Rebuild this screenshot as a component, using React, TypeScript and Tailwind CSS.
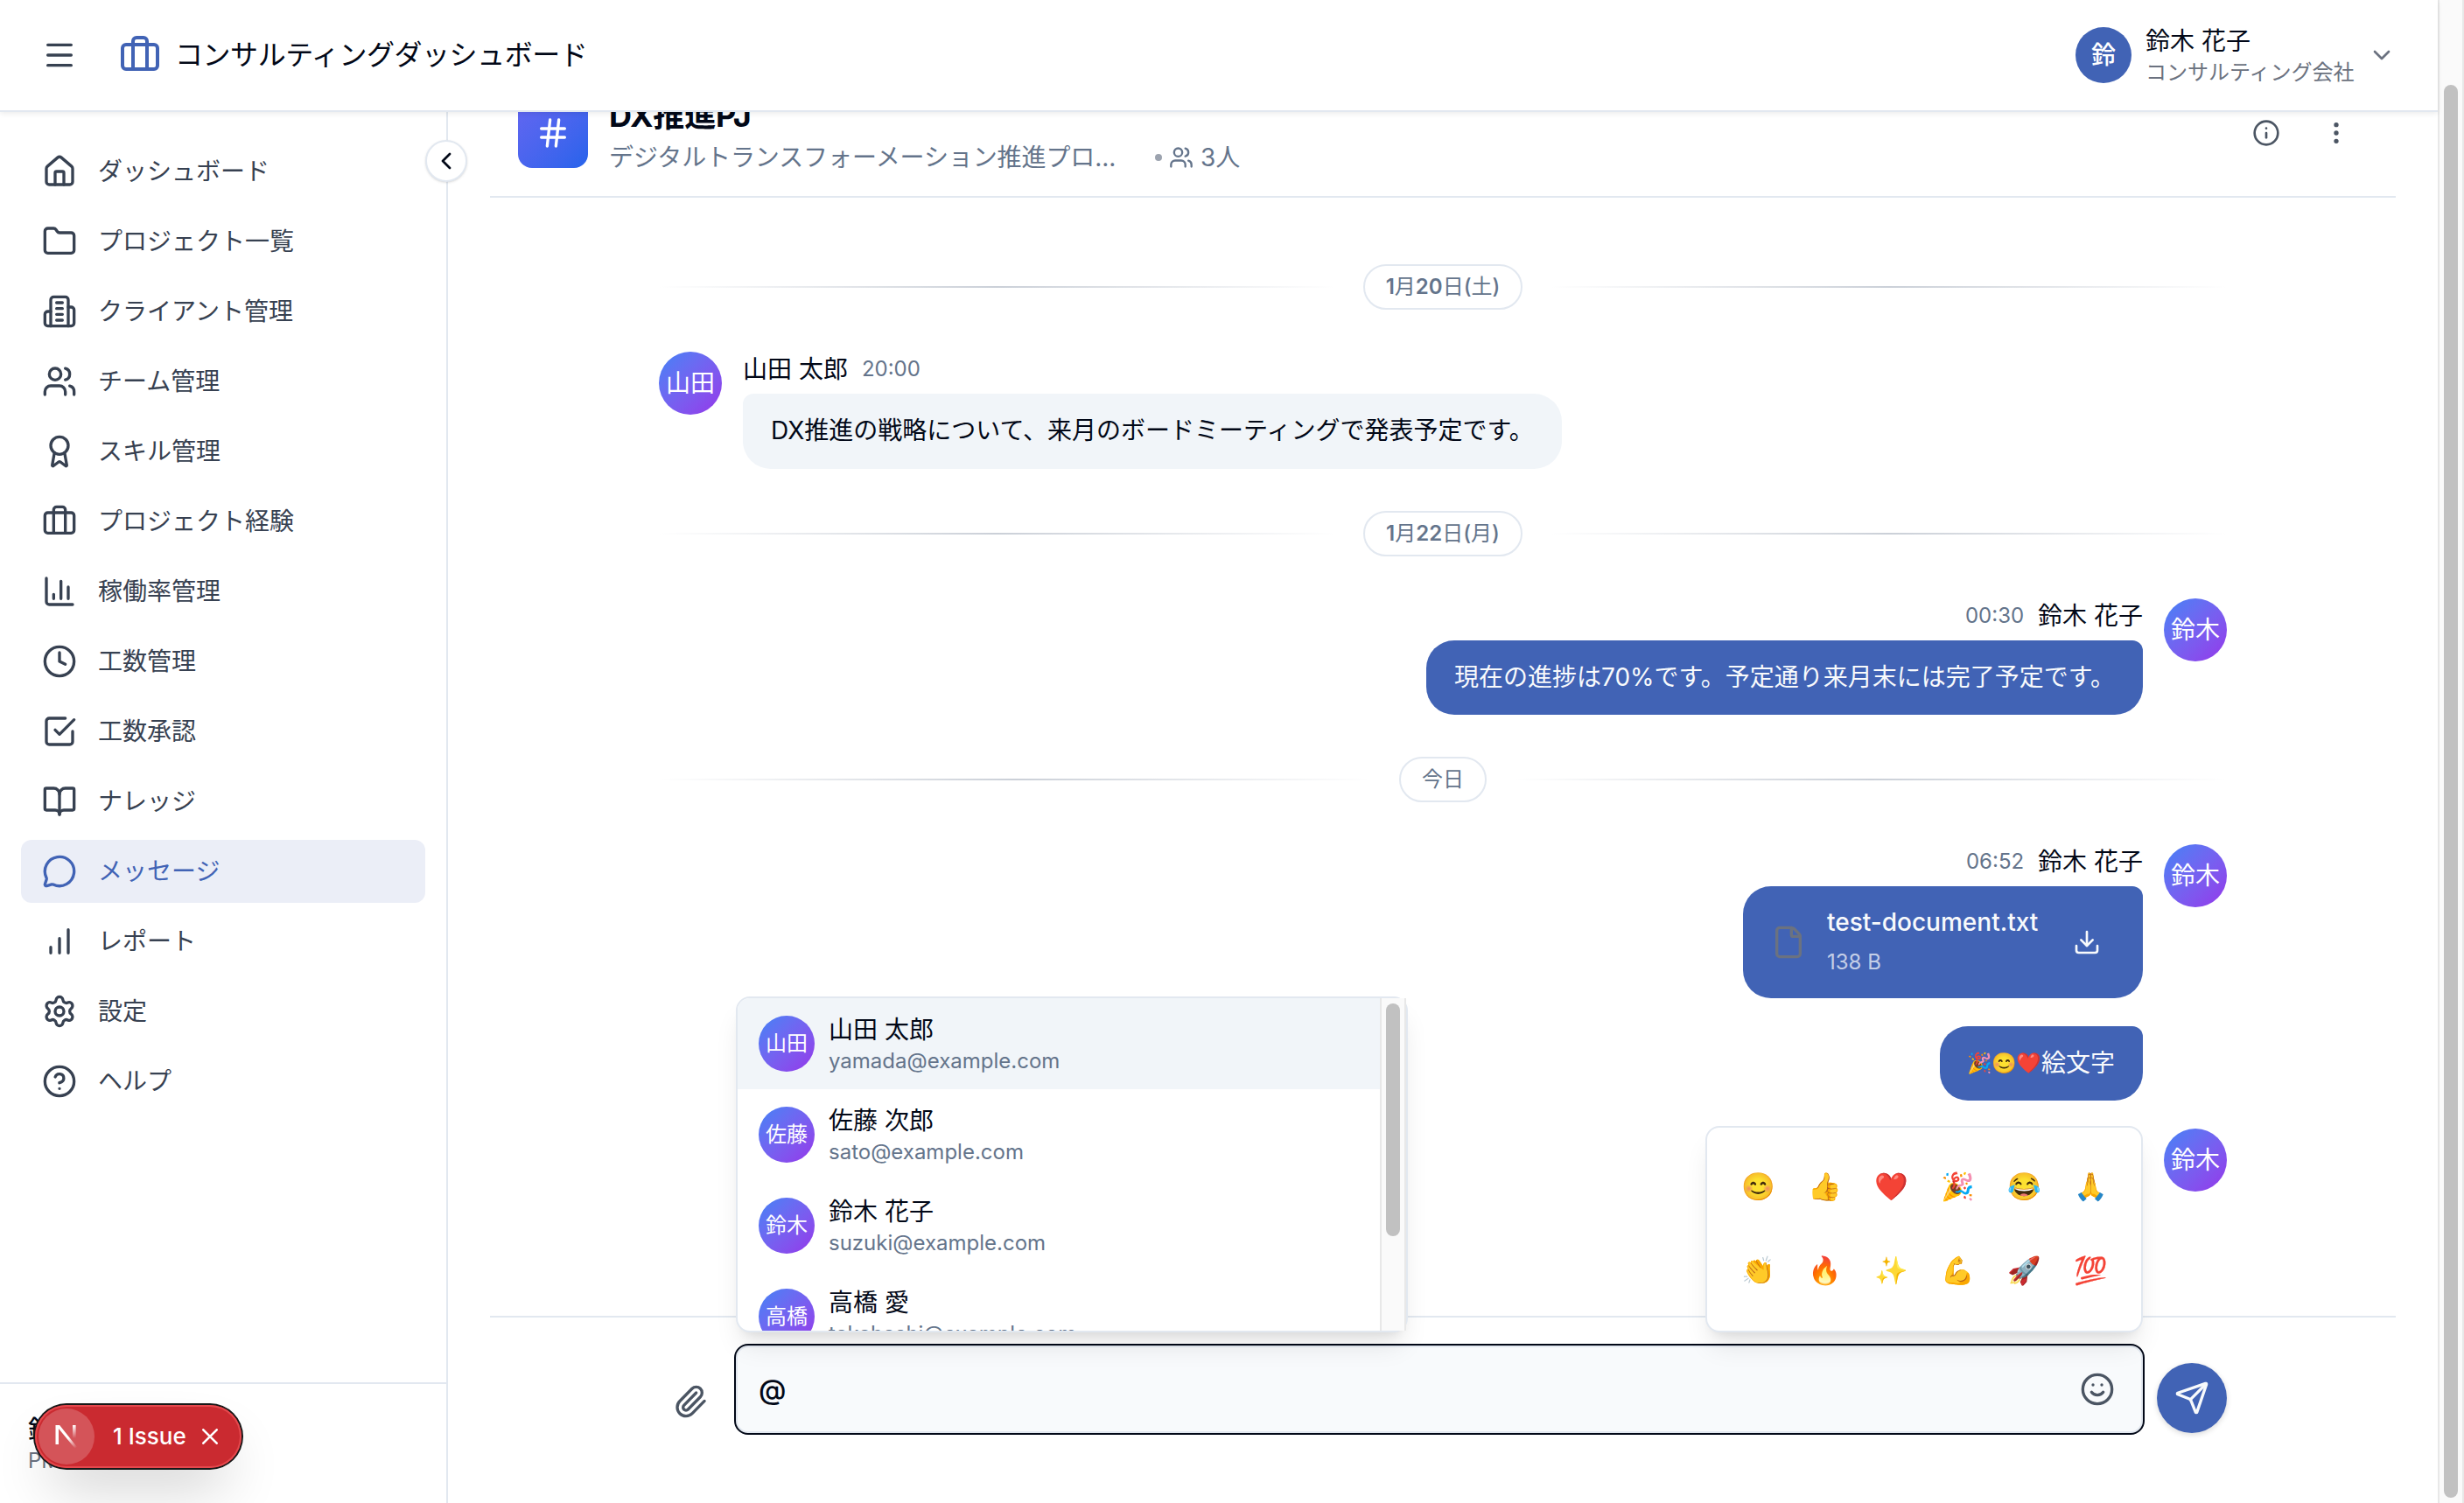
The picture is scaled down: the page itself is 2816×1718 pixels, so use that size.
import React from "react";
import {
  Menu,
  Briefcase,
  ChevronDown,
  ChevronLeft,
  Folder,
  Users,
  Award,
  Clock,
  BookOpen,
  MessageCircle,
  Settings,
  Info,
  MoreVertical,
  File as FileIcon,
  Download,
  Hash,
  Paperclip,
  Smile,
  Send,
} from "lucide-react";

type IconProps = { className?: string };

function strokeIcon(children: React.ReactNode) {
  return function Icon({ className }: IconProps) {
    return (
      <svg
        viewBox="0 0 24 24"
        fill="none"
        stroke="currentColor"
        strokeWidth={2}
        strokeLinecap="round"
        strokeLinejoin="round"
        className={className}
      >
        {children}
      </svg>
    );
  };
}

const House = strokeIcon(
  <>
    <path d="M15 21v-8a1 1 0 0 0-1-1h-4a1 1 0 0 0-1 1v8" />
    <path d="M3 10a2 2 0 0 1 .709-1.528l7-5.999a2 2 0 0 1 2.582 0l7 5.999A2 2 0 0 1 21 10v9a2 2 0 0 1-2 2H5a2 2 0 0 1-2-2z" />
  </>
);

const Building = strokeIcon(
  <>
    <path d="M6 22V4a2 2 0 0 1 2-2h8a2 2 0 0 1 2 2v18Z" />
    <path d="M6 12H4a2 2 0 0 0-2 2v6a2 2 0 0 0 2 2h2" />
    <path d="M18 9h2a2 2 0 0 1 2 2v9a2 2 0 0 1-2 2h-2" />
    <path d="M10 6h4M10 10h4M10 14h4M10 18h4" />
  </>
);

const ChartColumn = strokeIcon(
  <>
    <path d="M3 3v16a2 2 0 0 0 2 2h16" />
    <path d="M18 17V9M13 17V5M8 17v-3" />
  </>
);

const Bars = strokeIcon(<path d="M18 20V4M12 20V10M6 20v-4" />);

const CheckSquare = strokeIcon(
  <>
    <path d="m9 11 3 3L22 4" />
    <path d="M21 12v7a2 2 0 0 1-2 2H5a2 2 0 0 1-2-2V5a2 2 0 0 1 2-2h11" />
  </>
);

const Help = strokeIcon(
  <>
    <circle cx="12" cy="12" r="10" />
    <path d="M9.09 9a3 3 0 0 1 5.83 1c0 2-3 3-3 3M12 17h.01" />
  </>
);

const navItems = [
  { label: "ダッシュボード", Icon: House },
  { label: "プロジェクト一覧", Icon: Folder },
  { label: "クライアント管理", Icon: Building },
  { label: "チーム管理", Icon: Users },
  { label: "スキル管理", Icon: Award },
  { label: "プロジェクト経験", Icon: Briefcase },
  { label: "稼働率管理", Icon: ChartColumn },
  { label: "工数管理", Icon: Clock },
  { label: "工数承認", Icon: CheckSquare },
  { label: "ナレッジ", Icon: BookOpen },
  { label: "メッセージ", Icon: MessageCircle, active: true },
  { label: "レポート", Icon: Bars },
  { label: "設定", Icon: Settings },
  { label: "ヘルプ", Icon: Help },
];

const members = [
  { initials: "山田", name: "山田 太郎", email: "yamada@example.com", active: true },
  { initials: "佐藤", name: "佐藤 次郎", email: "sato@example.com" },
  { initials: "鈴木", name: "鈴木 花子", email: "suzuki@example.com" },
  { initials: "高橋", name: "高橋 愛", email: "takahashi@example.com" },
];

const emojis = ["😊", "👍", "❤️", "🎉", "😂", "🙏", "👏", "🔥", "✨", "💪", "🚀", "💯"];

function TopBar() {
  return (
    <header className="relative z-10 flex h-32 shrink-0 items-center border-b-2 border-[#e2e8f0] bg-white px-12 shadow-[0_2px_6px_rgba(0,0,0,0.08)]">
      <Menu className="size-10 text-[#374151]" />
      <Briefcase className="ml-12 size-12 text-[#4163b5]" />
      <h1 className="ml-4 text-[32px] leading-[48px] tracking-[-0.45px] text-[#020817]">
        コンサルティングダッシュボード
      </h1>
      <div className="ml-auto flex items-center">
        <div className="flex size-16 items-center justify-center rounded-full bg-[#4163b5] text-[28px] font-medium text-white">
          鈴
        </div>
        <div className="ml-4 w-[240px]">
          <div className="text-[28px] leading-10 text-[#020817]">鈴木 花子</div>
          <div className="text-[24px] leading-8 text-[#6b7280]">コンサルティング会社</div>
        </div>
        <ChevronDown className="ml-[14px] size-8 text-[#6b7280]" />
      </div>
    </header>
  );
}

function Sidebar() {
  return (
    <aside className="relative flex w-[512px] shrink-0 flex-col border-r-2 border-[#e2e8f0] bg-white">
      <nav className="flex flex-1 flex-col gap-2 px-6 pt-8">
        {navItems.map(({ label, Icon, active }) => (
          <div
            key={label}
            className={
              active
                ? "flex h-[72px] items-center gap-6 rounded-xl bg-[#ebeef7] px-6 text-[28px] text-[#4163b5]"
                : "flex h-[72px] items-center gap-6 rounded-xl px-6 text-[28px] text-[#374151]"
            }
          >
            <Icon className="size-10 shrink-0" />
            <span>{label}</span>
          </div>
        ))}
      </nav>
      <div className="h-[138px] border-t-2 border-[#e2e8f0] p-8">
        <div className="text-[28px] leading-10 font-medium text-[#020817]">鈴木 花子</div>
        <div className="text-[24px] leading-8 text-[#6b7280]">PM</div>
      </div>
      <button className="absolute top-8 -right-6 z-10 flex size-12 items-center justify-center rounded-full border-2 border-[#e2e8f0] bg-white shadow-sm">
        <ChevronLeft className="size-8 shrink-0 text-[#020817]" />
      </button>
      <IssueBadge />
    </aside>
  );
}

function IssueBadge() {
  return (
    <div className="absolute bottom-10 left-10 z-20 flex h-[72px] w-[236px] items-center rounded-full bg-[#ca2a30] pl-1 text-white shadow-[0_0_0_2px_#171717,inset_0_0_0_2px_#e5484d,0_32px_64px_-16px_rgba(0,0,0,0.24)]">
      <div className="flex size-16 items-center justify-center rounded-full bg-white/20">
        <svg viewBox="0 0 28 30" className="h-[30px] w-[28px]" fill="none">
          <defs>
            <linearGradient id="diag" x1="16" y1="17" x2="25" y2="28" gradientUnits="userSpaceOnUse">
              <stop stopColor="#fff" />
              <stop offset="1" stopColor="#fff" stopOpacity="0" />
            </linearGradient>
            <linearGradient id="stem" x1="23" y1="2" x2="23" y2="17" gradientUnits="userSpaceOnUse">
              <stop stopColor="#fff" />
              <stop offset="1" stopColor="#fff" stopOpacity="0" />
            </linearGradient>
          </defs>
          <path d="M1.5 24V2h4.6L26 27l-2 2L5 6v18z" fill="url(#diag)" />
          <path d="M21 2h3.6v16H21z" fill="url(#stem)" />
        </svg>
      </div>
      <span className="ml-[21px] text-[26px] leading-none font-medium whitespace-nowrap">1 Issue</span>
      <svg viewBox="0 0 18 18" className="mr-[27px] ml-auto size-[18px]" stroke="#fff" strokeWidth="2.6" strokeLinecap="round">
        <path d="M1.3 1.3 16.7 16.7M16.7 1.3 1.3 16.7" />
      </svg>
    </div>
  );
}

function ChatHeader() {
  return (
    <div className="-mt-14 flex h-[154px] shrink-0 items-center border-b-2 border-[#e2e8f0] px-8 pt-2">
      <div className="flex size-20 items-center justify-center rounded-2xl bg-linear-to-br from-[#6366f1] to-[#2563eb]">
        <Hash className="size-10 text-white" />
      </div>
      <div className="ml-6">
        <h2 className="text-[36px] leading-[56px] font-bold tracking-[-0.005em] text-[#020817]">DX推進PJ</h2>
        <div className="flex items-center text-[28px] leading-10 text-[#64748b]">
          <span className="w-[624px] tracking-[-0.1px]">デジタルトランスフォーメーション推進プロ...</span>
          <span className="size-2 rounded-full bg-[#9ca3af]" />
          <Users className="ml-2 size-7" />
          <span className="ml-2">3人</span>
        </div>
      </div>
      <div className="ml-auto flex items-center gap-12 pr-5 text-[#4b5563]">
        <Info className="size-8" />
        <MoreVertical className="size-8" />
      </div>
    </div>
  );
}

function DateDivider({ children }: { children: React.ReactNode }) {
  return (
    <div className="my-12 flex items-center first:mt-0">
      <div className="h-[2px] flex-1 bg-linear-to-r from-transparent via-[#cbd0d8] to-transparent" />
      <span className="mx-8 rounded-full border-2 border-[#e2e8f0] bg-white px-6 py-2 text-[24px] leading-8 text-[#64748b]">
        {children}
      </span>
      <div className="h-[2px] flex-1 bg-linear-to-r from-transparent via-[#cbd0d8] to-transparent" />
    </div>
  );
}

function Avatar({ children, small }: { children: string; small?: boolean }) {
  return (
    <div
      className={
        small
          ? "flex size-16 shrink-0 items-center justify-center rounded-full bg-linear-to-br from-[#3b82f6] to-[#9333ea] text-[24px] text-white"
          : "flex size-[72px] shrink-0 items-center justify-center rounded-full bg-linear-to-br from-[#3b82f6] to-[#9333ea] text-[28px] text-white"
      }
    >
      {children}
    </div>
  );
}

function OwnMessage({ time, children }: { time?: string; children?: React.ReactNode }) {
  return (
    <div className="flex items-start justify-end gap-6">
      <div className="flex flex-col items-end">
        {time && (
          <div className="mb-2 flex items-center gap-4 leading-10">
            <span className="text-[24px] text-[#64748b]">{time}</span>
            <span className="text-[28px] text-[#020817]">鈴木 花子</span>
          </div>
        )}
        {children}
      </div>
      <Avatar>鈴木</Avatar>
    </div>
  );
}

function Messages() {
  return (
    <div className="mx-auto flex min-h-0 w-[1792px] flex-1 flex-col pt-[76px]">
      <DateDivider>
        <b className="font-semibold">1</b>月<b className="font-semibold">20</b>日<b className="font-medium">(</b>土
        <b className="font-medium">)</b>
      </DateDivider>
      <div className="flex items-start gap-6">
        <Avatar>山田</Avatar>
        <div>
          <div className="mb-2 flex items-center gap-4 leading-10">
            <span className="text-[28px] text-[#020817]">山田 太郎</span>
            <span className="text-[24px] text-[#64748b]">20:00</span>
          </div>
          <div className="w-[936px] rounded-[32px] rounded-tl-xl bg-[#f1f5f9] px-8 py-5 text-[28px] leading-[45.5px] whitespace-nowrap text-[#020817]">
            DX推進の戦略について、来月のボードミーティングで発表予定です。
          </div>
        </div>
      </div>
      <DateDivider>
        <b className="font-semibold">1</b>月<b className="font-semibold">22</b>日<b className="font-medium">(</b>月
        <b className="font-medium">)</b>
      </DateDivider>
      <OwnMessage time="00:30">
        <div className="w-[819px] rounded-[32px] rounded-tr-xl bg-[#4163b5] px-8 py-5 text-[28px] leading-[45.5px] whitespace-nowrap text-[#f8fafc]">
          現在の進捗は70%です。予定通り来月末には完了予定です。
        </div>
      </OwnMessage>
      <DateDivider>今日</DateDivider>
      <OwnMessage time="06:52">
        <div className="flex w-[457px] items-center rounded-[32px] rounded-tr-xl bg-[#4163b5] px-8 py-5 text-[#f8fafc]">
          <FileIcon className="size-10 text-[#6b7280]" />
          <div className="ml-6 whitespace-nowrap">
            <div className="text-[28px] leading-[42px] font-medium">test-document.txt</div>
            <div className="mt-[2px] -mb-[2px] text-[24px] leading-[45.5px] text-white/70">138 B</div>
          </div>
          <Download className="mr-4 ml-auto size-8" />
        </div>
      </OwnMessage>
      <div className="mt-8 mr-24 flex items-center self-end rounded-[32px] rounded-tr-xl bg-[#4163b5] px-8 py-5 text-[28px] leading-[45.5px] text-[#f8fafc]">
        {["🎉", "😊", "❤️"].map((e) => (
          <span key={e} className="flex w-7 justify-center text-[23px]">
            {e}
          </span>
        ))}
        <span>絵文字</span>
      </div>
      <div className="mt-8">
        <OwnMessage />
      </div>
    </div>
  );
}

function MentionMenu() {
  return (
    <div className="absolute bottom-[calc(100%+17px)] -left-[2px] flex h-[384px] w-[768px] rounded-2xl border-2 border-[#e2e8f0] bg-white shadow-[0_20px_30px_-6px_rgba(0,0,0,0.1),0_8px_12px_-8px_rgba(0,0,0,0.1)]">
      <div className="flex-1 overflow-hidden rounded-l-[14px]">
        {members.map((m) => (
          <div
            key={m.email}
            className={
              m.active
                ? "flex h-[104px] items-center gap-4 bg-[#f1f5f9] px-6"
                : "flex h-[104px] items-center gap-4 px-6"
            }
          >
            <Avatar small>{m.initials}</Avatar>
            <div>
              <div className="text-[28px] leading-10 text-[#020817]">{m.name}</div>
              <div className="text-[24px] leading-8 text-[#64748b]">{m.email}</div>
            </div>
          </div>
        ))}
      </div>
      <div className="flex w-[30px] justify-center border-x-2 border-[#e8e8e8] bg-[#fafafa] pt-[6px]">
        <div className="h-[266px] w-4 rounded-full bg-[#c1c1c1]" />
      </div>
    </div>
  );
}

function EmojiPicker() {
  return (
    <div className="absolute -right-[2px] bottom-[calc(100%+17px)] grid h-[236px] w-[500px] grid-cols-6 gap-2 rounded-2xl border-2 border-[#e2e8f0] bg-white p-6 shadow-[0_20px_30px_-6px_rgba(0,0,0,0.1),0_8px_12px_-8px_rgba(0,0,0,0.1)]">
      {emojis.map((e) => (
        <span key={e} className="flex h-[88px] items-center justify-center pb-1 text-[31px] leading-none">
          {e}
        </span>
      ))}
    </div>
  );
}

function Composer() {
  return (
    <div className="relative z-10 h-[214px] shrink-0 border-t-2 border-[#e2e8f0] bg-white">
      <div className="mx-auto flex w-[1792px] items-end pt-8">
        <div className="flex w-[88px] justify-start pb-4 pl-4">
          <Paperclip className="size-10 text-[#4b5563]" />
        </div>
        <div className="relative mr-4 flex h-[100px] flex-1 items-center rounded-[14px] border-2 border-[#e2e8f0] bg-[#f8fafc] px-6 outline-2 outline-[#020817]">
          <span className="pt-[2px] text-[32px] leading-none font-medium text-[#020817]">@</span>
          <Smile className="mr-[6px] ml-auto size-10 text-[#4b5563]" />
          <MentionMenu />
          <EmojiPicker />
        </div>
        <button className="flex size-20 items-center justify-center rounded-full bg-[#4163b5] shadow-[0_2px_6px_rgba(0,0,0,0.15)]">
          <Send className="size-10 text-[#f8fafc]" />
        </button>
      </div>
    </div>
  );
}

export default function App() {
  return (
    <div className="flex h-[1718px] w-[2816px] overflow-hidden bg-white font-['Inter','Noto_Sans_CJK_JP',sans-serif]">
      <div className="flex w-[2786px] flex-col">
        <TopBar />
        <div className="flex min-h-0 flex-1">
          <Sidebar />
          <main className="flex min-h-0 flex-1 flex-col px-12">
            <ChatHeader />
            <Messages />
            <Composer />
          </main>
        </div>
      </div>
      <div className="flex w-[30px] justify-center border-x-2 border-[#e8e8e8] bg-[#fafafa] pt-[97px]">
        <div className="h-[1615px] w-4 rounded-full bg-[#c1c1c1]" />
      </div>
    </div>
  );
}
